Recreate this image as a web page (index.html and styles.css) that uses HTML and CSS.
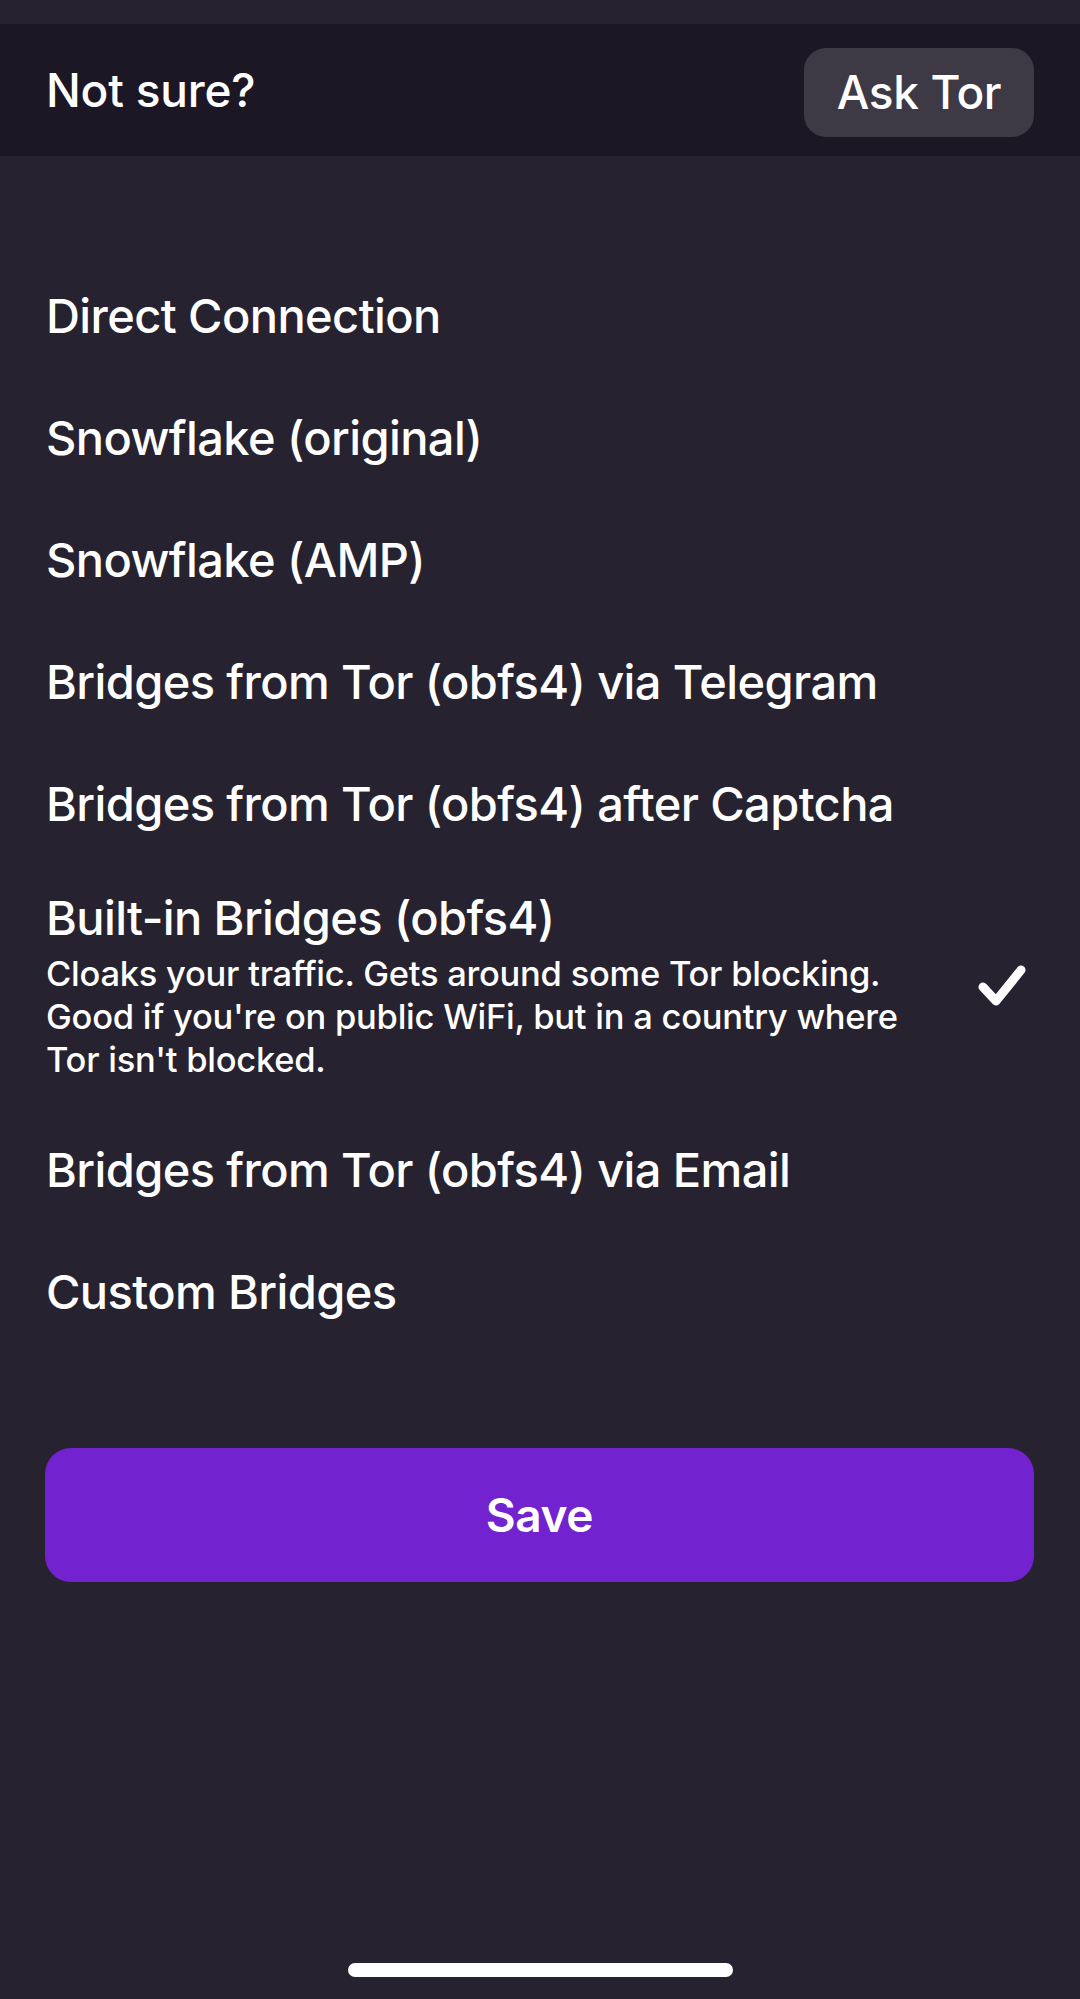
FILE: index.html
```html
<!DOCTYPE html>
<html lang="en">
<head>
<meta charset="utf-8">
<title>Bridge Configuration</title>
<link rel="stylesheet" href="styles.css">
</head>
<body>
<div class="screen">
  <div class="status-strip"></div>
  <header class="header">
    <span class="header-title">Not sure?</span>
    <button class="ask-btn">Ask Tor</button>
  </header>

  <ul class="options">
    <li class="option"><span class="option-title">Direct Connection</span></li>
    <li class="option"><span class="option-title">Snowflake (original)</span></li>
    <li class="option"><span class="option-title">Snowflake (AMP)</span></li>
    <li class="option"><span class="option-title">Bridges from Tor (obfs4) via Telegram</span></li>
    <li class="option"><span class="option-title">Bridges from Tor (obfs4) after Captcha</span></li>
    <li class="option option-selected">
      <div class="option-text">
        <span class="option-title">Built-in Bridges (obfs4)</span>
        <p class="option-desc">Cloaks your traffic. Gets around some Tor blocking.<br>Good if you're on public WiFi, but in a country where<br>Tor isn't blocked.</p>
      </div>
      <svg class="check" width="58" height="46" viewBox="0 0 58 46" aria-hidden="true">
        <polyline points="7,24 20,38 45,7" fill="none" stroke="#ffffff" stroke-width="9" stroke-linecap="round" stroke-linejoin="round"/>
      </svg>
    </li>
    <li class="option"><span class="option-title">Bridges from Tor (obfs4) via Email</span></li>
    <li class="option"><span class="option-title">Custom Bridges</span></li>
  </ul>

  <div class="actions">
    <button class="save-btn">Save</button>
  </div>

  <div class="home-indicator"></div>
</div>
</body>
</html>
```

FILE: styles.css
```css
html, body {
  margin: 0;
  padding: 0;
  background: #27222f;
}

body {
  font-family: Inter, "Noto Sans", "Liberation Sans", sans-serif;
  color: #ffffff;
}

.screen {
  position: relative;
  width: 1080px;
  height: 1999px;
  background: #27222f;
  overflow: hidden;
}

.status-strip {
  height: 24px;
}

.header {
  height: 132px;
  background: #1c1724;
  display: flex;
  align-items: center;
  justify-content: space-between;
  padding: 0 46px 0 46px;
  box-sizing: border-box;
}

.header-title {
  font-size: 46px;
  font-weight: 500;
  letter-spacing: -0.2px;
}

.ask-btn {
  width: 230px;
  height: 89px;
  border: none;
  border-radius: 22px;
  background: #3d3945;
  color: #ffffff;
  font-family: inherit;
  font-size: 46px;
  font-weight: 500;
  letter-spacing: -0.4px;
  padding: 0;
  margin-top: 4px;
}

.options {
  list-style: none;
  margin: 99px 0 0 0;
  padding: 0;
}

.option {
  min-height: 122px;
  display: flex;
  align-items: center;
  padding: 0 46px;
  box-sizing: border-box;
}

.option-title {
  font-size: 47px;
  font-weight: 500;
  letter-spacing: -0.6px;
  line-height: 56px;
}

.option-selected {
  padding-top: 25px;
  padding-bottom: 28px;
}

.option-text {
  flex: 1;
  display: flex;
  flex-direction: column;
}

.option-desc {
  margin: 6px 0 0 0;
  font-size: 34.5px;
  font-weight: 500;
  line-height: 43px;
  letter-spacing: -0.25px;
}

.check {
  flex: none;
  display: block;
}

.actions {
  margin-top: 95px;
  padding: 0 46px 0 45px;
}

.save-btn {
  display: block;
  width: 100%;
  height: 134px;
  border: none;
  border-radius: 26px;
  background: #7322cf;
  color: #ffffff;
  font-family: inherit;
  font-size: 46px;
  font-weight: 600;
  letter-spacing: -0.4px;
  padding: 0;
}

.home-indicator {
  position: absolute;
  left: 348px;
  bottom: 22px;
  width: 385px;
  height: 14px;
  border-radius: 7px;
  background: #ffffff;
}
```
